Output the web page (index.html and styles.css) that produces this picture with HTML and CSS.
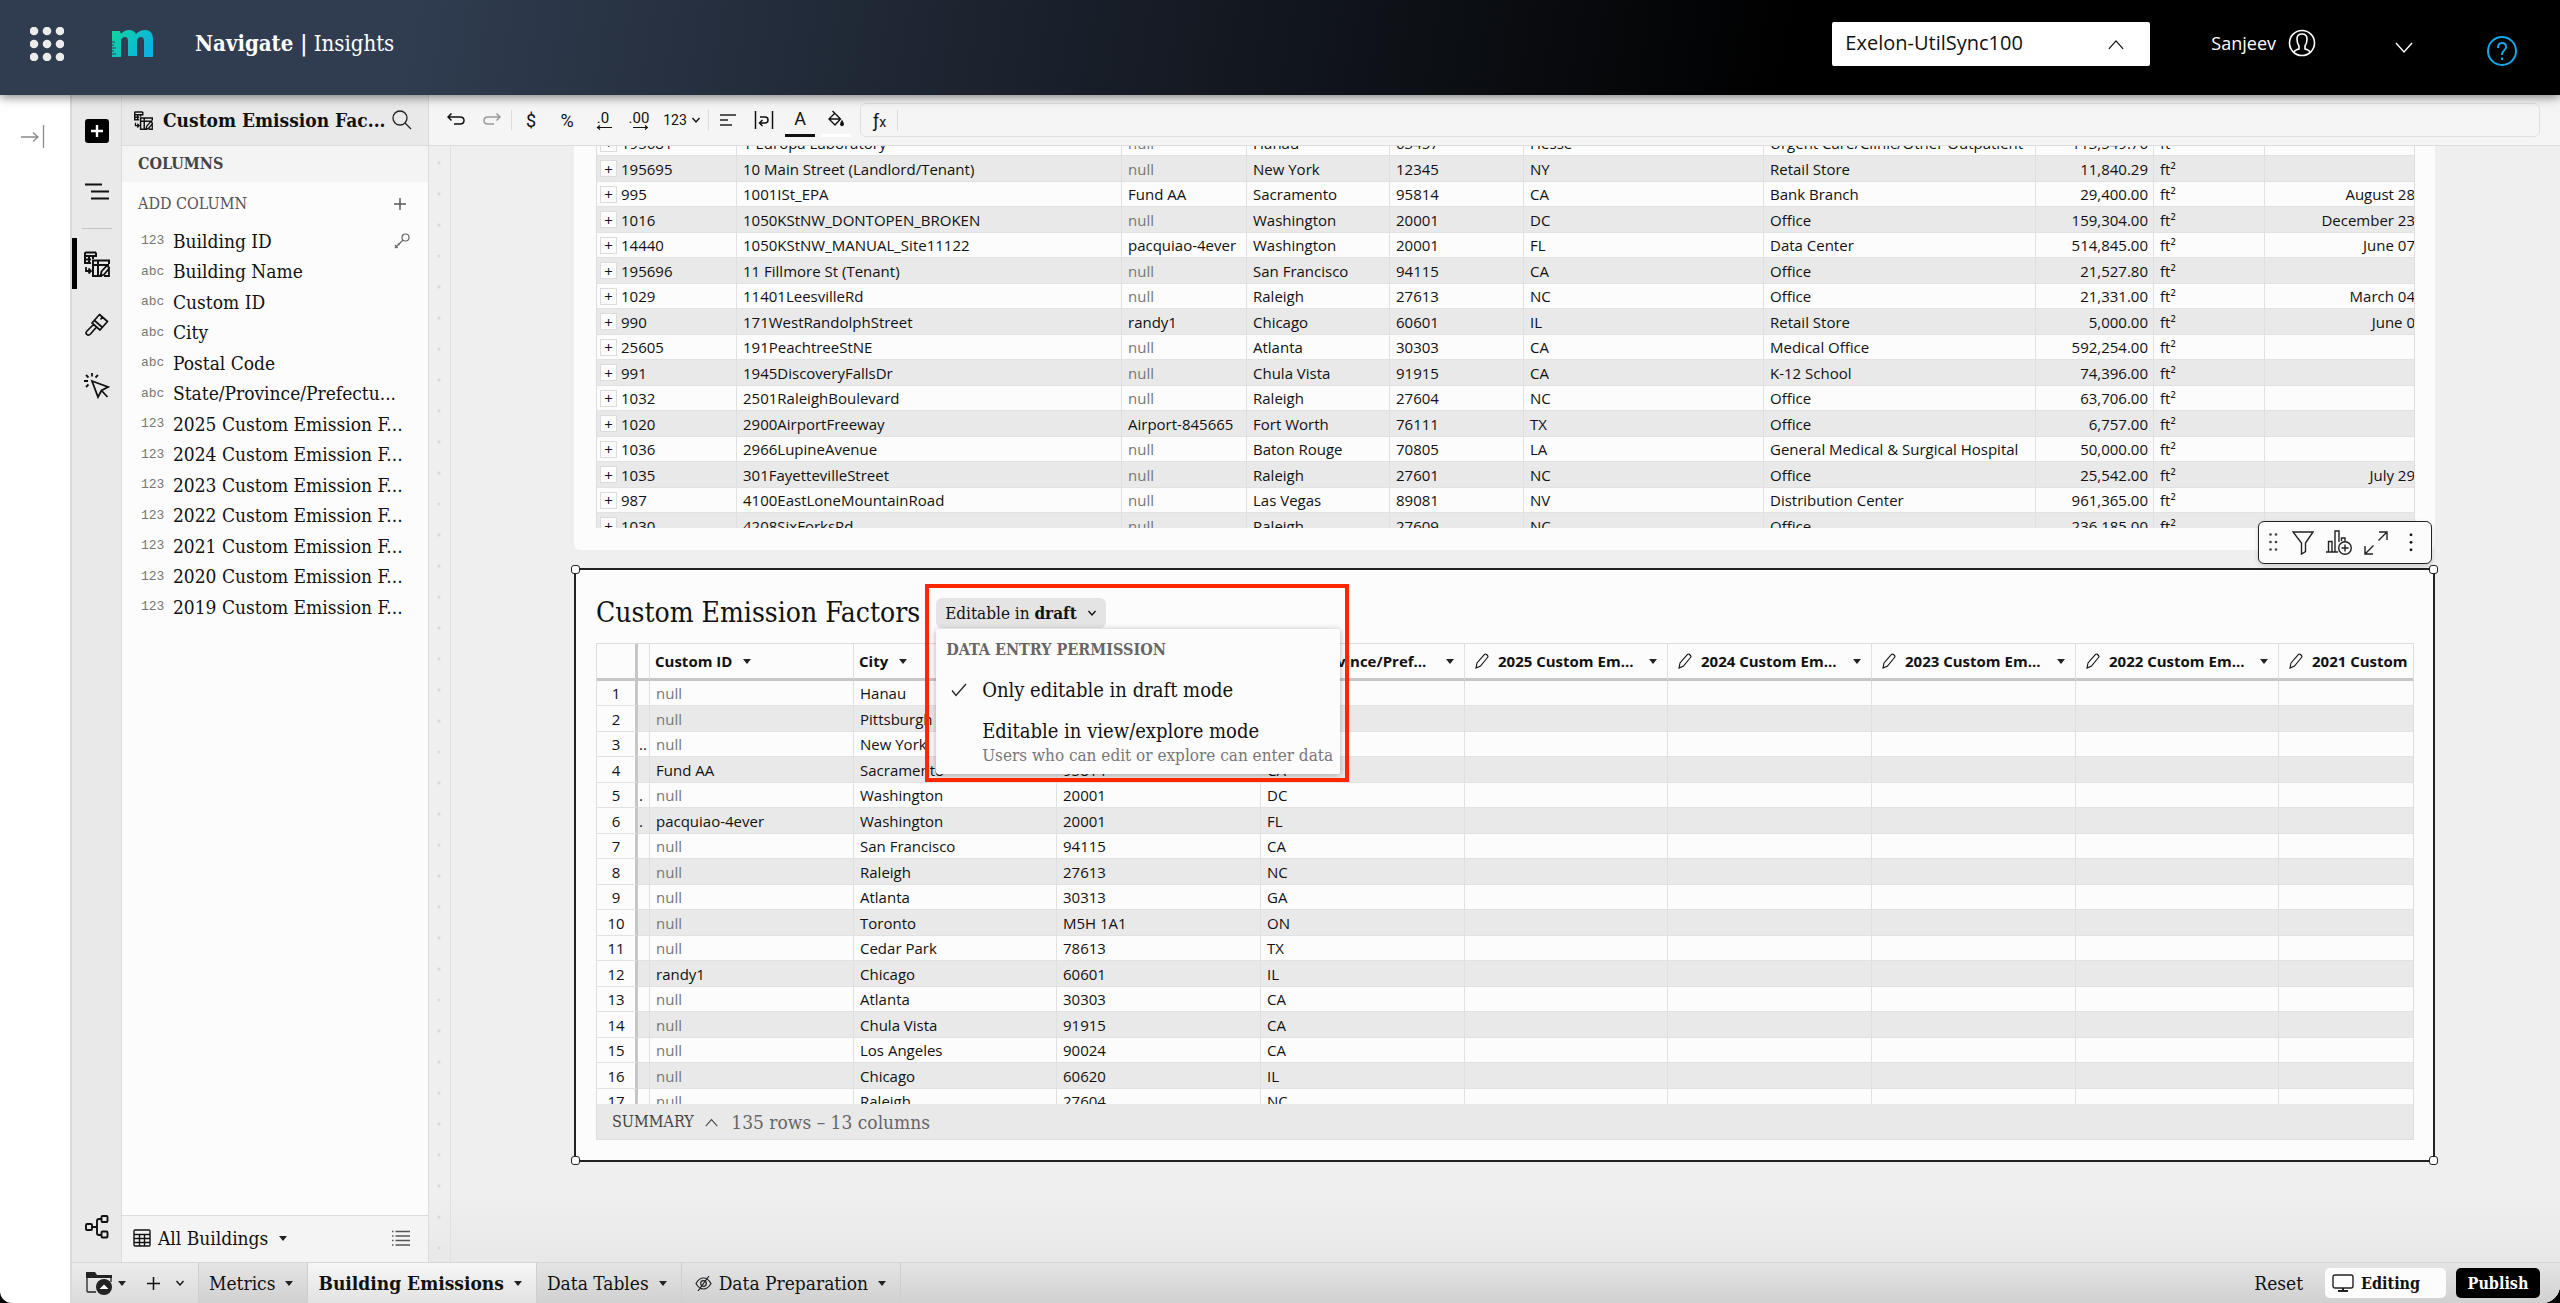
FILE: index.html
```html
<!DOCTYPE html>
<html lang="en">
    <head>
        <meta charset="UTF-8" />
        <title>Navigate | Insights</title>
        <link rel="stylesheet" href="styles.css">
    </head>

    <body>
        <!-- icons shared by several places -->
        <svg class="defs" aria-hidden="true">
            <symbol id="i-down" viewBox="0 0 10 10"><path d="M1.500 3l3.500 4 3.500-4" fill="none" stroke="currentColor" stroke-width="1.400"/></symbol>
            <symbol id="i-up" viewBox="0 0 18 12"><path d="M1 11l8-9 8 9" fill="none" stroke="currentColor" stroke-width="1.400"/></symbol>
            <symbol id="i-plus" viewBox="0 0 12 12"><path d="M6 0v12M0 6h12" fill="none" stroke="currentColor" stroke-width="1.400"/></symbol>
            <symbol id="i-pencil" viewBox="0 0 16 16"><path d="M2 15l1-5L10.500 1.500q1-1 2 0l1 1q1 1 0 2L6.500 13z" fill="none" stroke="currentColor" stroke-width="1.100"/></symbol>
            <symbol id="i-entry" viewBox="0 0 26 26">
                <g fill="none" stroke="currentColor" stroke-width="2">
                    <path d="M12 1.500H2q-1 0-1 1V12h6M1 5h11V1.500M1 8.500h6M5 5v7M9 5v3"/>
                    <path d="M2 16v4h4M4.500 17.500L7 20l-2.500 2.500" stroke-width="1.800"/>
                    <path d="M18 25H9V9.500h16V13M9 14h16M14 9.500V25"/>
                    <path d="M16.500 25l1-4.500 5.500-6 2.500 2.500-5.500 6.500zM25 18v7h-5" stroke-width="1.800"/>
                </g>
            </symbol>
        </svg>

        <header class="top">
            <button class="icon-btn apps" aria-label="Apps">
                <svg width="34" height="34" viewBox="0 0 34 34" fill="#ececec">
                    <circle cx="4" cy="4" r="4.300"/><circle cx="17" cy="4" r="4.300"/><circle cx="30" cy="4" r="4.300"/>
                    <circle cx="4" cy="17" r="4.300"/><circle cx="17" cy="17" r="4.300"/><circle cx="30" cy="17" r="4.300"/>
                    <circle cx="4" cy="30" r="4.300"/><circle cx="17" cy="30" r="4.300"/><circle cx="30" cy="30" r="4.300"/>
                </svg>
            </button>
            <svg class="logo" width="42" height="28" viewBox="0 0 42 28">
                <defs>
                    <linearGradient id="lg" x1="0" x2="1" y1="0" y2="0.500">
                        <stop offset="0" stop-color="#0fd69c"/><stop offset="1" stop-color="#0cb2e2"/>
                    </linearGradient>
                </defs>
                <path fill="url(#lg)" d="M0 1h8l1 3q3-4 8-4 5 0 7 4 4-4 9-4 8 0 8 9v18h-9V11q0-4-3-4-4 0-4 5v14h-9V11q0-4-3-4-4 0-4 5v15H0z"/>
                <path d="M0 12h3M0 15h2M0 18h4M0 21h2M0 24h4" stroke="#303c50" stroke-width="1.200"/>
            </svg>
            <div class="brand"><b>Navigate |</b> Insights</div>

            <div class="account">
                <div class="company">
                    <select aria-label="Company"><option>Exelon-UtilSync100</option></select>
                    <svg width="16" height="11"><use href="#i-up"/></svg>
                </div>
                <button class="user">Sanjeev
                    <svg width="28" height="28" viewBox="0 0 28 28" fill="none" stroke="#fff" stroke-width="1.600">
                        <circle cx="14" cy="14" r="12.500"/>
                        <path d="M6 23q1-2 5-3v-3q-2-3-2-7 0-5 5-5t5 5q0 4-2 7v3q4 1 5 3"/>
                    </svg>
                </button>
                <button class="icon-btn more" aria-label="Account menu">
                    <svg width="18" height="12" viewBox="0 0 18 12"><path d="M1 1l8 9 8-9" fill="none" stroke="#fff" stroke-width="1.400"/></svg>
                </button>
                <button class="icon-btn help" aria-label="Help">
                    <svg width="32" height="32" viewBox="0 0 32 32" fill="none" stroke="#13a8e8" stroke-width="2">
                        <circle cx="16" cy="16" r="14"/>
                        <path d="M12 13q0-5 4-5t4 4q0 2-2 3.500-2 1.500-2 4.500M16 22.500v2.500"/>
                    </svg>
                </button>
            </div>
        </header>

        <div class="app">
            <aside class="drawer">
                <button class="icon-btn" aria-label="Expand menu">
                    <svg width="24" height="24" viewBox="0 0 24 24" fill="none" stroke="#8a8a8a" stroke-width="1.300">
                        <path d="M0 13h17M12 8.500l5 4.500-5 4.500M22.500 1v23"/>
                    </svg>
                </button>
            </aside>

            <div class="studio">
                <div class="studio-main">
                    <nav class="rail">
                        <button class="icon-btn" aria-label="Add element">
                            <svg width="24" height="24" viewBox="0 0 24 24"><rect width="24" height="24" rx="3"/><path d="M12 6v12M6 12h12" stroke="#fff" stroke-width="2.400"/></svg>
                        </button>
                        <button class="icon-btn" aria-label="Outline">
                            <svg width="24" height="24" viewBox="0 0 24 24"><path d="M0 4.500h17M6 11.500h18M6 18.500h18" stroke="#111" stroke-width="1.800"/></svg>
                        </button>
                        <hr>
                        <button class="icon-btn active" aria-label="Properties">
                            <svg width="26" height="26"><use href="#i-entry"/></svg>
                        </button>
                        <button class="icon-btn" aria-label="Format">
                            <svg width="24" height="24" viewBox="0 0 24 24" fill="none" stroke="#111" stroke-width="1.700" stroke-linejoin="round">
                                <path d="M14.500 1.500l8 7-7.500 8.500-8-7zM9.500 7.500l8 7M17.500 4l-2 2.500M8.500 11.500l-6.500 6.500q-2 2 0 3.500 1.500 1.500 3.500-.500l6-7"/>
                            </svg>
                        </button>
                        <button class="icon-btn" aria-label="Actions">
                            <svg width="26" height="26" viewBox="0 0 26 26" fill="none" stroke="#111" stroke-width="1.800">
                                <path d="M8 8l16 6-6.500 3.500L14 24zM17.500 17.500l6 6.500M8 0v3.500M2 2l2.500 2.500M14 2l-2.500 2.500M0 8h4M2 14l2.500-2.500"/>
                            </svg>
                        </button>
                        <button class="icon-btn lineage" aria-label="Lineage">
                            <svg width="24" height="24" viewBox="0 0 24 24" fill="none" stroke="#111" stroke-width="1.900">
                                <rect x="1" y="9" width="6" height="6" rx="1"/><rect x="16.500" y="1" width="6" height="6" rx="1"/><rect x="16.500" y="16.500" width="6" height="6" rx="1"/>
                                <path d="M7 12h5M16.500 4H14q-2 0-2 2v12q0 2 2 2h2.500"/>
                            </svg>
                        </button>
                    </nav>

                    <aside class="sidebar">
                        <div class="side-head">
                            <svg width="19" height="19"><use href="#i-entry"/></svg>
                            <h2>Custom Emission Fac...</h2>
                            <button class="icon-btn" aria-label="Search">
                                <svg width="20" height="20" viewBox="0 0 20 20" fill="none" stroke="#222" stroke-width="1.300"><circle cx="8" cy="8" r="7"/><path d="M13 13l6 6"/></svg>
                            </button>
                        </div>
                        <h3>COLUMNS</h3>
                        <div class="add-col">ADD COLUMN
                            <button class="icon-btn" aria-label="Add column"><svg width="12" height="12"><use href="#i-plus"/></svg></button>
                        </div>
                        <ul>
                            <li><i>123</i>Building ID
                                <svg width="16" height="16" viewBox="0 0 16 16" fill="none" stroke="#666" stroke-width="1.200"><circle cx="11.500" cy="4.500" r="3.500"/><path d="M9 7l-8 8M1 12l2.500 3M4 10.500l1.500 1.500"/></svg>
                            </li>
                            <li><i>abc</i>Building Name</li>
                            <li><i>abc</i>Custom ID</li>
                            <li><i>abc</i>City</li>
                            <li><i>abc</i>Postal Code</li>
                            <li><i>abc</i>State/Province/Prefectu...</li>
                            <li><i>123</i>2025 Custom Emission F...</li>
                            <li><i>123</i>2024 Custom Emission F...</li>
                            <li><i>123</i>2023 Custom Emission F...</li>
                            <li><i>123</i>2022 Custom Emission F...</li>
                            <li><i>123</i>2021 Custom Emission F...</li>
                            <li><i>123</i>2020 Custom Emission F...</li>
                            <li><i>123</i>2019 Custom Emission F...</li>
                        </ul>
                        <div class="side-foot">
                            <button class="source">
                                <svg width="18" height="18" viewBox="0 0 18 18" fill="none" stroke="#111" stroke-width="1.400"><rect x="1" y="1" width="16" height="16" rx="1"/><path d="M1 5.500h16M1 9.500h16M1 13.500h16M6.500 5.500V17M11.500 5.500V17"/></svg>
                                All Buildings <span class="caret"></span>
                            </button>
                            <button class="icon-btn" aria-label="List">
                                <svg width="18" height="16" viewBox="0 0 18 16" stroke="#555" stroke-width="1.300"><path d="M3.500 1.500H18M3.500 6H18M3.500 10.500H18M3.500 15H18M0 1.500h1.500M0 6h1.500M0 10.500h1.500M0 15h1.500"/></svg>
                            </button>
                        </div>
                    </aside>

                    <main class="work">
                        <div class="toolbar">
                            <button class="tool w36" aria-label="Undo"><svg width="18" height="14" viewBox="0 0 18 14" fill="none" stroke="#111" stroke-width="1.500"><path d="M1 4h12q4 0 4 3.500T13 11H7M4.500.500L1 4l3.500 3.500"/></svg></button>
                            <button class="tool w36" aria-label="Redo"><svg width="18" height="14" viewBox="0 0 18 14" fill="none" stroke="#999" stroke-width="1.500"><path d="M17 4H5Q1 4 1 7.500T5 11h6M13.500.500L17 4l-3.500 3.500"/></svg></button>
                            <span class="bar"></span>
                            <button class="tool w36">$</button>
                            <button class="tool w36">%</button>
                            <button class="tool w36 dec" aria-label="Fewer decimals">.0<svg width="18" height="5" viewBox="0 0 18 5" fill="none" stroke="#111" stroke-width="1.200"><path d="M4 2.500h14M6 .500l-2.500 2L6 4.500"/></svg></button>
                            <button class="tool w36 dec" aria-label="More decimals">.00<svg width="18" height="5" viewBox="0 0 18 5" fill="none" stroke="#111" stroke-width="1.200"><path d="M3 2.500h14M15 .500l2.500 2-2.500 2"/></svg></button>
                            <button class="tool num">123 <svg width="10" height="10"><use href="#i-down"/></svg></button>
                            <span class="bar"></span>
                            <button class="tool w36" aria-label="Align"><svg width="16" height="12" viewBox="0 0 16 12" stroke="#222" stroke-width="1.500"><path d="M0 1h16M0 6h8M0 11h12"/></svg></button>
                            <button class="tool w36" aria-label="Wrap"><svg width="20" height="18" viewBox="0 0 20 18" fill="none" stroke="#111" stroke-width="1.500"><path d="M1.500 0v18M18.500 0v18M6 6h5q3 0 3 3t-3 3H6M8.500 9L5.500 12l3 3"/></svg></button>
                            <button class="tool w36 ink">A</button>
                            <button class="tool w36 ink fill" aria-label="Fill"><svg width="16" height="17" viewBox="0 0 16 17" fill="none" stroke="#111" stroke-width="1.400"><path d="M4.500 1l8 8-5.500 6-6-6 6-6M1 9h11.500"/><path d="M14 11q2.500 4 0 4.500-2.500-.500 0-4.500z" fill="#111"/></svg></button>
                            <label class="formula"><span>ƒ<small>x</small></span><input type="text" aria-label="Formula"></label>
                        </div>

                        <div class="board">
                            <div class="gutter"></div>
                            <div class="canvas">
                                <section class="card buildings">
                                    <div class="clip">
                                        <table class="t1">
                                            <colgroup><col class="c140"><col class="c385"><col class="c125"><col class="c143"><col class="c134"><col class="c240"><col class="c272"><col class="c118"><col class="c111"><col class="c154"></colgroup>
                                            <tbody>
                                                <tr><td><button>+</button>195681</td><td>1 Europa Laboratory</td><td class="null">null</td><td>Hanau</td><td>63457</td><td>Hesse</td><td>Urgent Care/Clinic/Other Outpatient</td><td>113,549.76</td><td>ft²</td><td></td></tr>
                                                <tr><td><button>+</button>195695</td><td>10 Main Street (Landlord/Tenant)</td><td class="null">null</td><td>New York</td><td>12345</td><td>NY</td><td>Retail Store</td><td>11,840.29</td><td>ft²</td><td></td></tr>
                                                <tr><td><button>+</button>995</td><td>1001ISt_EPA</td><td>Fund AA</td><td>Sacramento</td><td>95814</td><td>CA</td><td>Bank Branch</td><td>29,400.00</td><td>ft²</td><td>August 28</td></tr>
                                                <tr><td><button>+</button>1016</td><td>1050KStNW_DONTOPEN_BROKEN</td><td class="null">null</td><td>Washington</td><td>20001</td><td>DC</td><td>Office</td><td>159,304.00</td><td>ft²</td><td>December 23</td></tr>
                                                <tr><td><button>+</button>14440</td><td>1050KStNW_MANUAL_Site11122</td><td>pacquiao-4ever</td><td>Washington</td><td>20001</td><td>FL</td><td>Data Center</td><td>514,845.00</td><td>ft²</td><td>June 07</td></tr>
                                                <tr><td><button>+</button>195696</td><td>11 Fillmore St (Tenant)</td><td class="null">null</td><td>San Francisco</td><td>94115</td><td>CA</td><td>Office</td><td>21,527.80</td><td>ft²</td><td></td></tr>
                                                <tr><td><button>+</button>1029</td><td>11401LeesvilleRd</td><td class="null">null</td><td>Raleigh</td><td>27613</td><td>NC</td><td>Office</td><td>21,331.00</td><td>ft²</td><td>March 04</td></tr>
                                                <tr><td><button>+</button>990</td><td>171WestRandolphStreet</td><td>randy1</td><td>Chicago</td><td>60601</td><td>IL</td><td>Retail Store</td><td>5,000.00</td><td>ft²</td><td>June 0</td></tr>
                                                <tr><td><button>+</button>25605</td><td>191PeachtreeStNE</td><td class="null">null</td><td>Atlanta</td><td>30303</td><td>CA</td><td>Medical Office</td><td>592,254.00</td><td>ft²</td><td></td></tr>
                                                <tr><td><button>+</button>991</td><td>1945DiscoveryFallsDr</td><td class="null">null</td><td>Chula Vista</td><td>91915</td><td>CA</td><td>K-12 School</td><td>74,396.00</td><td>ft²</td><td></td></tr>
                                                <tr><td><button>+</button>1032</td><td>2501RaleighBoulevard</td><td class="null">null</td><td>Raleigh</td><td>27604</td><td>NC</td><td>Office</td><td>63,706.00</td><td>ft²</td><td></td></tr>
                                                <tr><td><button>+</button>1020</td><td>2900AirportFreeway</td><td>Airport-845665</td><td>Fort Worth</td><td>76111</td><td>TX</td><td>Office</td><td>6,757.00</td><td>ft²</td><td></td></tr>
                                                <tr><td><button>+</button>1036</td><td>2966LupineAvenue</td><td class="null">null</td><td>Baton Rouge</td><td>70805</td><td>LA</td><td>General Medical &amp; Surgical Hospital</td><td>50,000.00</td><td>ft²</td><td></td></tr>
                                                <tr><td><button>+</button>1035</td><td>301FayettevilleStreet</td><td class="null">null</td><td>Raleigh</td><td>27601</td><td>NC</td><td>Office</td><td>25,542.00</td><td>ft²</td><td>July 29</td></tr>
                                                <tr><td><button>+</button>987</td><td>4100EastLoneMountainRoad</td><td class="null">null</td><td>Las Vegas</td><td>89081</td><td>NV</td><td>Distribution Center</td><td>961,365.00</td><td>ft²</td><td></td></tr>
                                                <tr><td><button>+</button>1030</td><td>4208SixForksRd</td><td class="null">null</td><td>Raleigh</td><td>27609</td><td>NC</td><td>Office</td><td>236,185.00</td><td>ft²</td><td></td></tr>
                                            </tbody>
                                        </table>
                                    </div>
                                </section>

                                <section class="card selected">
                                    <div class="card-tools">
                                        <svg class="grip" width="9" height="19" viewBox="0 0 9 19" fill="#444"><circle cx="1.500" cy="1.500" r="1.300"/><circle cx="7" cy="1.500" r="1.300"/><circle cx="1.500" cy="9" r="1.300"/><circle cx="7" cy="9" r="1.300"/><circle cx="1.500" cy="16.500" r="1.300"/><circle cx="7" cy="16.500" r="1.300"/></svg>
                                        <button class="icon-btn" aria-label="Filter"><svg width="22" height="24" viewBox="0 0 22 24" fill="none" stroke="#222" stroke-width="1.400"><path d="M1 1h20l-7.500 11v8.500L9.500 23V12z"/></svg></button>
                                        <button class="icon-btn" aria-label="Create child element"><svg width="26" height="25" viewBox="0 0 26 25" fill="none" stroke="#222" stroke-width="1.400"><path d="M0 22h12M2.500 22V11.500H6V22M9 22V1h4v11M15.500 11V8H19v3"/><circle cx="19" cy="18" r="6.300"/><path d="M19 14.500v7M15.500 18h7"/></svg></button>
                                        <button class="icon-btn" aria-label="Maximize"><svg width="24" height="24" viewBox="0 0 24 24" fill="none" stroke="#222" stroke-width="1.400"><path d="M15 1h8v8M23 1l-8.500 8.500M1 15v8h8M1 23l8.500-8.500"/></svg></button>
                                        <button class="icon-btn" aria-label="More"><svg width="4" height="19" viewBox="0 0 4 19" fill="#111"><circle cx="2" cy="1.800" r="1.400"/><circle cx="2" cy="9.300" r="1.400"/><circle cx="2" cy="16.800" r="1.400"/></svg></button>
                                    </div>
                                    <span class="knob tl"></span><span class="knob tr"></span><span class="knob bl"></span><span class="knob br"></span>

                                    <div class="card-head">
                                        <h1>Custom Emission Factors</h1>
                                        <div class="perm">
                                            <button class="perm-btn"><span>Editable in <b>draft</b></span> <svg width="10" height="10"><use href="#i-down"/></svg></button>
                                            <div class="menu" role="menu">
                                                <h4>DATA ENTRY PERMISSION</h4>
                                                <button role="menuitemradio" aria-checked="true">
                                                    <svg width="16" height="14" viewBox="0 0 16 14"><path d="M1 7.500l4 5L15 1" fill="none" stroke="#222" stroke-width="1.300"/></svg>
                                                    <span>Only editable in draft mode</span>
                                                </button>
                                                <button role="menuitemradio" aria-checked="false">
                                                    <span>Editable in view/explore mode<small>Users who can edit or explore can enter data</small></span>
                                                </button>
                                            </div>
                                            <div class="mark"></div>
                                        </div>
                                    </div>

                                    <div class="frame">
                                        <div class="clip">
                                            <table class="t2">
                                                <colgroup><col class="c41"><col class="c12"><col class="c204"><col class="c203"><col class="c204"><col class="c204"><col class="c203"><col class="c204"><col class="c204"><col class="c203"><col class="c204"></colgroup>
                                                <thead>
                                                    <tr>
                                                        <th></th><th></th>
                                                        <th><div>Custom ID <span class="caret"></span></div></th>
                                                        <th><div>City <span class="caret"></span></div></th>
                                                        <th><div>Postal Code <span class="caret"></span></div></th>
                                                        <th><div class="full">State/Province/Pref... <span class="caret"></span></div></th>
                                                        <th><div class="full"><svg width="16" height="16"><use href="#i-pencil"/></svg>2025 Custom Em... <span class="caret"></span></div></th>
                                                        <th><div class="full"><svg width="16" height="16"><use href="#i-pencil"/></svg>2024 Custom Em... <span class="caret"></span></div></th>
                                                        <th><div class="full"><svg width="16" height="16"><use href="#i-pencil"/></svg>2023 Custom Em... <span class="caret"></span></div></th>
                                                        <th><div class="full"><svg width="16" height="16"><use href="#i-pencil"/></svg>2022 Custom Em... <span class="caret"></span></div></th>
                                                        <th><div class="full"><svg width="16" height="16"><use href="#i-pencil"/></svg>2021 Custom</div></th>
                                                    </tr>
                                                </thead>
                                                <tbody>
                                                    <tr><td>1</td><td></td><td class="null">null</td><td>Hanau</td><td></td><td></td><td></td><td></td><td></td><td></td><td></td></tr>
                                                    <tr><td>2</td><td></td><td class="null">null</td><td>Pittsburgh</td><td></td><td></td><td></td><td></td><td></td><td></td><td></td></tr>
                                                    <tr><td>3</td><td>..</td><td class="null">null</td><td>New York</td><td></td><td></td><td></td><td></td><td></td><td></td><td></td></tr>
                                                    <tr><td>4</td><td></td><td>Fund AA</td><td>Sacramento</td><td>95814</td><td>CA</td><td></td><td></td><td></td><td></td><td></td></tr>
                                                    <tr><td>5</td><td>.</td><td class="null">null</td><td>Washington</td><td>20001</td><td>DC</td><td></td><td></td><td></td><td></td><td></td></tr>
                                                    <tr><td>6</td><td>.</td><td>pacquiao-4ever</td><td>Washington</td><td>20001</td><td>FL</td><td></td><td></td><td></td><td></td><td></td></tr>
                                                    <tr><td>7</td><td></td><td class="null">null</td><td>San Francisco</td><td>94115</td><td>CA</td><td></td><td></td><td></td><td></td><td></td></tr>
                                                    <tr><td>8</td><td></td><td class="null">null</td><td>Raleigh</td><td>27613</td><td>NC</td><td></td><td></td><td></td><td></td><td></td></tr>
                                                    <tr><td>9</td><td></td><td class="null">null</td><td>Atlanta</td><td>30313</td><td>GA</td><td></td><td></td><td></td><td></td><td></td></tr>
                                                    <tr><td>10</td><td></td><td class="null">null</td><td>Toronto</td><td>M5H 1A1</td><td>ON</td><td></td><td></td><td></td><td></td><td></td></tr>
                                                    <tr><td>11</td><td></td><td class="null">null</td><td>Cedar Park</td><td>78613</td><td>TX</td><td></td><td></td><td></td><td></td><td></td></tr>
                                                    <tr><td>12</td><td></td><td>randy1</td><td>Chicago</td><td>60601</td><td>IL</td><td></td><td></td><td></td><td></td><td></td></tr>
                                                    <tr><td>13</td><td></td><td class="null">null</td><td>Atlanta</td><td>30303</td><td>CA</td><td></td><td></td><td></td><td></td><td></td></tr>
                                                    <tr><td>14</td><td></td><td class="null">null</td><td>Chula Vista</td><td>91915</td><td>CA</td><td></td><td></td><td></td><td></td><td></td></tr>
                                                    <tr><td>15</td><td></td><td class="null">null</td><td>Los Angeles</td><td>90024</td><td>CA</td><td></td><td></td><td></td><td></td><td></td></tr>
                                                    <tr><td>16</td><td></td><td class="null">null</td><td>Chicago</td><td>60620</td><td>IL</td><td></td><td></td><td></td><td></td><td></td></tr>
                                                    <tr><td>17</td><td></td><td class="null">null</td><td>Raleigh</td><td>27604</td><td>NC</td><td></td><td></td><td></td><td></td><td></td></tr>
                                                </tbody>
                                            </table>
                                        </div>
                                        <div class="summary">
                                            <button>SUMMARY <svg width="13" height="9"><use href="#i-up"/></svg></button>
                                            <span>135 rows – 13 columns</span>
                                        </div>
                                    </div>
                                </section>
                            </div>
                        </div>
                    </main>
                </div>

                <footer class="tabs">
                    <div class="tabs-start">
                        <button class="icon-btn" aria-label="Workbook menu">
                            <svg width="27" height="25" viewBox="0 0 27 25"><path d="M0 1h9l2 3h15v3H0z" fill="#222"/><path d="M1 6v14q0 1 1 1h8M25 6v5" fill="none" stroke="#222" stroke-width="1.300"/><circle cx="18" cy="16" r="8" fill="#222"/><path d="M13.500 18l4.500-4.500 4.500 4.500z" fill="#fff"/></svg>
                            <span class="caret"></span>
                        </button>
                        <button class="icon-btn" aria-label="Add page"><svg width="13" height="13"><use href="#i-plus"/></svg></button>
                        <button class="icon-btn" aria-label="Page options"><svg width="10" height="10"><use href="#i-down"/></svg></button>
                    </div>
                    <button class="tab">Metrics <span class="caret"></span></button>
                    <button class="tab current">Building Emissions <span class="caret"></span></button>
                    <button class="tab">Data Tables <span class="caret"></span></button>
                    <button class="tab">
                        <svg width="17" height="15" viewBox="0 0 17 15" fill="none" stroke="#222" stroke-width="1.200"><path d="M1 7.500Q4 2 8.500 2T16 7.500Q13 13 8.500 13T1 7.500zM14 0L3 15"/><circle cx="8.500" cy="7.500" r="2.800"/></svg>
                        Data Preparation <span class="caret"></span>
                    </button>
                    <div class="tabs-end">
                        <button class="reset">Reset</button>
                        <button class="editing">
                            <svg width="22" height="18" viewBox="0 0 22 18" fill="none" stroke="#222" stroke-width="1.400"><rect x="1" y="1" width="20" height="13" rx="2"/><path d="M6 17h10M11 14v3" stroke-width="2"/></svg>
                            Editing
                        </button>
                        <button class="publish">Publish</button>
                    </div>
                </footer>
            </div>
        </div>
    </body>
</html>
```

FILE: styles.css
```css
* {
    box-sizing: border-box;
}
html {
    background: #000;
}
body {
    margin: 0;
    height: 100vh;
    display: flex;
    flex-direction: column;
    overflow: hidden;
    background: #fff;
    border-radius: 0 0 18px 12px;
    font-family: "DejaVu Serif Condensed", "DejaVu Serif", serif;
    font-size: 17px;
    color: #111;
}
button {
    padding: 0;
    border: 0;
    background: none;
    font: inherit;
    color: inherit;
}
h1, h2, h3, h4, ul {
    margin: 0;
    padding: 0;
}
svg {
    flex: none;
}
.defs {
    position: absolute;
    width: 0;
    height: 0;
}
.icon-btn {
    display: flex;
    align-items: center;
    justify-content: center;
}
.caret {
    flex: none;
    border: 4px solid transparent;
    border-top: 5px solid #222;
    border-bottom: 0;
}

/* header */
.top {
    position: relative;
    z-index: 5;
    flex: none;
    display: flex;
    align-items: center;
    height: 95px;
    padding: 0 42px 7px 30px;
    background: linear-gradient(100deg, #303c50 16%, #000 70%);
    box-shadow: 0 2px 10px rgba(0, 0, 0, .5);
    color: #fff;
    font-size: 22px;
}
.logo {
    margin: 0 41px 0 48px;
}
.brand {
    padding-bottom: 2px;
}
.account {
    display: flex;
    align-items: center;
    margin-left: auto;
    font: 20px "Open Sans", sans-serif;
}
.company {
    display: flex;
    align-items: center;
    width: 318px;
    height: 44px;
    padding-right: 26px;
    background: #fff;
    border-radius: 2px;
    color: #111;
}
.company select {
    flex: 1;
    height: 44px;
    padding: 0 0 3px 13px;
    border: 0;
    appearance: none;
    background: none;
    font: inherit;
    color: #111;
}
.user {
    display: flex;
    align-items: center;
    gap: 12px;
    margin: 0 79px 0 61px;
    padding-bottom: 2px;
    font-size: 18px;
}
.more {
    margin: 8px 73px 0 0;
}
.help {
    margin-top: 14px;
}

/* shell */
.app {
    flex: 1;
    min-height: 0;
    display: flex;
}
.drawer {
    width: 70px;
    padding: 29px 0 0 21px;
}
.studio {
    flex: 1;
    min-width: 0;
    display: flex;
    flex-direction: column;
    border-left: 2px solid #dadada;
    background: #efefef;
}
.studio-main {
    flex: 1;
    min-height: 0;
    display: flex;
}

/* icon rail */
.rail {
    width: 50px;
    display: flex;
    flex-direction: column;
    padding-top: 10px;
    background: #e9e9e9;
    border-right: 1px solid #dcdcdc;
}
.rail .icon-btn {
    height: 51px;
    margin-bottom: 10px;
}
.rail hr {
    width: 30px;
    margin: 1px auto 9px;
    border: 0;
    border-top: 1px solid #c4c4c4;
}
.rail .active {
    border-left: 5px solid #000;
    padding-right: 5px;
}
.rail .lineage {
    margin-top: auto;
}

/* sidebar */
.sidebar {
    width: 307px;
    display: flex;
    flex-direction: column;
    background: #fcfcfc;
    border-right: 1px solid #dcdcdc;
    font-size: 19px;
}
.side-head {
    display: flex;
    align-items: center;
    height: 51px;
    padding: 0 16px 0 12px;
    background: #e9e9e9;
    border-bottom: 1px solid #dcdcdc;
}
.side-head h2 {
    flex: 1;
    margin-left: 10px;
    font-size: 19px;
    white-space: nowrap;
}
.sidebar h3 {
    height: 36px;
    padding-left: 16px;
    background: #f4f4f4;
    color: #444;
    font-size: 16px;
    line-height: 36px;
}
.add-col {
    display: flex;
    align-items: center;
    justify-content: space-between;
    height: 43px;
    padding: 0 22px 0 16px;
    color: #555;
    font-size: 16px;
}
.sidebar ul {
    flex: 1;
    list-style: none;
}
.sidebar li {
    display: flex;
    align-items: center;
    height: 31px;
    padding: 0 18px 0 19px;
    white-space: nowrap;
}
.sidebar li:nth-child(even) {
    height: 30px;
}
.sidebar li svg {
    margin-left: auto;
}
.sidebar i {
    width: 32px;
    color: #777;
    font: 13px "Liberation Mono", monospace;
}
.side-foot {
    display: flex;
    align-items: center;
    justify-content: space-between;
    height: 47px;
    padding: 0 18px 2px 11px;
    background: #f4f4f4;
    border-top: 1px solid #dcdcdc;
}
.source {
    display: flex;
    align-items: center;
    gap: 7px;
}
.source .caret {
    margin-left: 4px;
}

/* toolbar */
.work {
    flex: 1;
    min-width: 0;
    display: flex;
    flex-direction: column;
}
.toolbar {
    display: flex;
    align-items: center;
    height: 51px;
    padding: 0 20px 0 9px;
    background: #f5f5f5;
    border-bottom: 1px solid #dcdcdc;
}
.tool {
    display: flex;
    align-items: center;
    justify-content: center;
    height: 34px;
    font: 18px "Roboto", sans-serif;
}
.w36 {
    width: 36px;
}
.dec {
    flex-direction: column;
    font-size: 15px;
    line-height: 14px;
}
.num {
    gap: 4px;
    width: 50px;
    font-size: 14px;
}
.bar {
    width: 1px;
    height: 20px;
    margin: 0 1px;
    background: #dcdcdc;
}
.ink {
    width: 30px;
    margin: 0 3px;
    border-bottom: 3px solid #111;
}
.fill {
    border-color: #fff;
}
.formula {
    flex: 1;
    display: flex;
    align-items: center;
    height: 34px;
    margin-left: 6px;
    border: 1px solid #e0e0e0;
    border-radius: 6px;
}
.formula span {
    width: 37px;
    padding-left: 12px;
    border-right: 1px solid #dcdcdc;
    font: 18px "Roboto", sans-serif;
}
.formula small {
    font-size: 14px;
}
.formula input {
    flex: 1;
    border: 0;
    background: none;
}

/* board */
.board {
    flex: 1;
    min-height: 0;
    display: flex;
    background: linear-gradient(#efefef 94%, #e8e8e8);
}
.gutter {
    width: 22px;
    border-right: 1px solid #e0e0e0;
    background: radial-gradient(circle at 10px 17px, #d9d9d9 1px, transparent 2px) 0 0 / 100% 31px repeat-y;
}
.canvas {
    flex: 1;
    min-width: 0;
    display: flex;
    flex-direction: column;
    gap: 18px;
    padding: 0 125px 0 123px;
}
.card {
    background: #fcfcfc;
}
.buildings {
    padding: 0 20px 22px 22px;
    border-radius: 0 0 6px 6px;
}
.clip {
    overflow: hidden;
}
.buildings .clip {
    height: 382px;
    border: solid #dedede;
    border-width: 0 1px;
}

/* tables */
table {
    width: 0;
    table-layout: fixed;
    border-collapse: separate;
    border-spacing: 0;
    font: 15px "Open Sans", sans-serif;
}
td, th {
    padding: 0 6px;
    border-right: 1px solid #e0e0e0;
    border-bottom: 1px solid #e2e2e2;
    line-height: 20px;
    white-space: nowrap;
    text-align: left;
}
tbody tr {
    height: 25px;
}
tbody tr:nth-child(even) {
    height: 26px;
    background: #e9e9e9;
}
.null {
    color: #777;
}
.t1 {
    margin-top: -15px;
}
.t1 td:nth-child(8) {
    padding-right: 5px;
    text-align: right;
}
.t1 td:nth-child(10) {
    padding-right: 3px;
    text-align: right;
}
.t1 td:first-child {
    padding-left: 3px;
}
.t1 button {
    width: 17px;
    height: 17px;
    margin-right: 4px;
    border: 1px solid #dcdcdc;
    background: #fcfcfc;
    line-height: 14px;
}
.c12 { width: 12px; }
.c41 { width: 41px; }
.c111 { width: 111px; }
.c118 { width: 118px; }
.c125 { width: 125px; }
.c134 { width: 134px; }
.c140 { width: 140px; }
.c143 { width: 143px; }
.c154 { width: 154px; }
.c203 { width: 203px; }
.c204 { width: 204px; }
.c240 { width: 240px; }
.c272 { width: 272px; }
.c385 { width: 385px; }

/* selected card */
.selected {
    position: relative;
    padding: 21px 19px 20px 20px;
    border: 2px solid #222;
}
.knob {
    position: absolute;
    width: 9px;
    height: 9px;
    border: 1px solid #222;
    border-radius: 3px;
    background: #fff;
}
.tl, .tr { top: -5px; }
.bl, .br { bottom: -5px; }
.tl, .bl { left: -5px; }
.tr, .br { right: -5px; }
.card-tools {
    position: absolute;
    top: -49px;
    right: 1px;
    display: flex;
    align-items: center;
    gap: 12px;
    height: 43px;
    padding: 0 18px 0 10px;
    border: 1px solid #222;
    border-radius: 6px;
    background: #fcfcfc;
    box-shadow: 0 2px 5px rgba(0, 0, 0, .15);
}
.card-tools .icon-btn:last-child {
    margin-left: 9px;
}
.grip {
    margin-right: 2px;
}
.card-head {
    display: flex;
    align-items: center;
    gap: 16px;
    height: 44px;
    margin-bottom: 8px;
}
.card-head h1 {
    font-size: 28px;
    font-weight: normal;
    line-height: 36px;
    white-space: nowrap;
}
.perm {
    position: relative;
}
.perm-btn {
    display: flex;
    align-items: center;
    gap: 5px;
    height: 30px;
    padding: 0 9px;
    border-radius: 6px;
    background: #e4e4e4;
    font-size: 17px;
    white-space: nowrap;
}
.perm-btn svg {
    margin-left: 5px;
}
.menu {
    position: absolute;
    z-index: 2;
    top: 31px;
    left: 0;
    width: 404px;
    padding: 9px 0 8px;
    border-radius: 2px;
    background: #fcfcfc;
    box-shadow: 0 1px 6px rgba(0, 0, 0, .3);
    white-space: nowrap;
}
.menu h4 {
    padding-left: 10px;
    color: #666;
    font-size: 16px;
    line-height: 24px;
}
.menu button {
    display: flex;
    align-items: center;
    width: 100%;
    padding: 15px 0 0 15px;
    text-align: left;
    font-size: 20px;
    line-height: 26px;
}
.menu button span {
    margin-left: 15px;
}
.menu button:last-child span {
    margin-left: 31px;
}
.menu small {
    display: block;
    color: #777;
    font-size: 17px;
    line-height: 22px;
}
/* red outline round the permission menu */
.mark {
    position: absolute;
    z-index: 3;
    top: -14px;
    left: -11px;
    width: 424px;
    height: 198px;
    border: 4px solid #ff2600;
}
.frame {
    border: 1px solid #dedede;
}
.frame .clip {
    height: 460px;
}
.t2 th {
    height: 37px;
    padding: 0 10px 0 5px;
    border-bottom: 3px solid #c6c6c6;
}
.t2 th div {
    display: flex;
    align-items: center;
    gap: 11px;
}
.t2 th .full .caret {
    margin-left: auto;
}
.t2 th svg {
    margin: 0 -3px 0 4px;
}
.t2 td:first-child, .t2 th:first-child {
    border-right: 3px solid #c6c6c6;
    background: #fcfcfc;
    text-align: center;
}
.t2 td:nth-child(2), .t2 th:nth-child(2) {
    padding: 0 1px;
}
.summary {
    display: flex;
    align-items: center;
    gap: 13px;
    height: 35px;
    padding-left: 15px;
    background: #e9e9e9;
    color: #666;
    font-size: 19px;
}
.summary button {
    color: #444;
    font-size: 16px;
}
.summary svg {
    margin-left: 7px;
}

/* bottom tabs */
.tabs {
    flex: none;
    display: flex;
    height: 41px;
    border-top: 1px solid #d6d6d6;
    background: linear-gradient(#e4e4e4, #d0d0d0);
    font-size: 19px;
}
.tabs-start {
    display: flex;
    align-items: center;
    gap: 21px;
    width: 127px;
    padding-left: 14px;
    background: linear-gradient(#ececec, #dadada);
    border-right: 1px solid #cfcfcf;
}
.tabs-start .icon-btn:last-child {
    margin-left: -6px;
}
.tabs-start .caret {
    margin-left: 5px;
}
.tab {
    display: flex;
    align-items: center;
    gap: 10px;
    padding: 0 14px 0 10px;
    border-right: 1px solid #cfcfcf;
    white-space: nowrap;
}
.tab svg {
    margin: 0 -3px 0 3px;
}
.current {
    background: linear-gradient(#f6f6f6, #e2e2e2);
    font-weight: bold;
}
.tabs-end {
    display: flex;
    align-items: center;
    margin-left: auto;
    padding-right: 20px;
}
.editing {
    display: flex;
    align-items: center;
    gap: 7px;
    width: 121px;
    height: 30px;
    margin: 0 10px 0 22px;
    padding-left: 7px;
    border-radius: 5px;
    background: #fcfcfc;
    font-size: 16px;
    font-weight: bold;
}
.publish {
    width: 84px;
    height: 30px;
    border-radius: 5px;
    background: #000;
    color: #fff;
    font-size: 16px;
    font-weight: bold;
}
```
